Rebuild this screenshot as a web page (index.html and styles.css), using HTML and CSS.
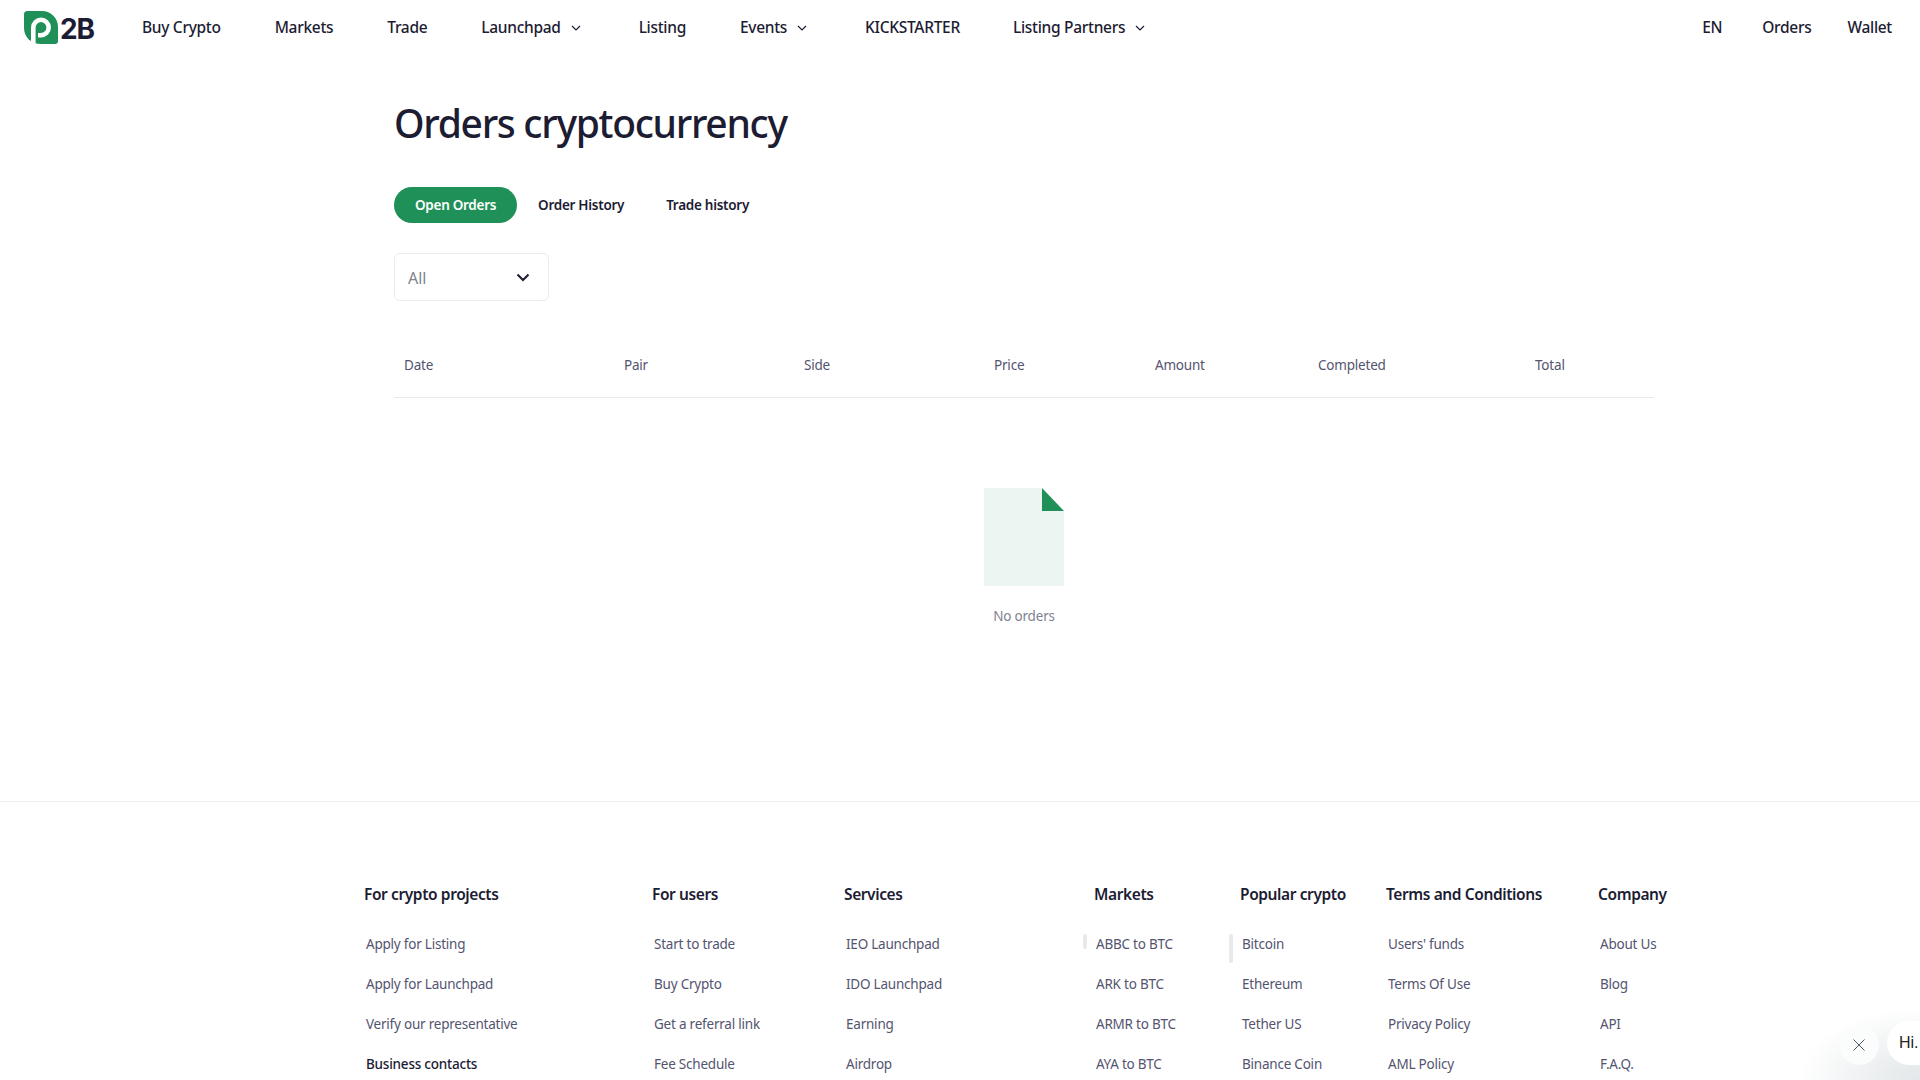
FILE: index.html
```html
<!DOCTYPE html>
<html lang="en">
<head>
<meta charset="utf-8">
<title>Orders cryptocurrency</title>
<link rel="stylesheet" href="styles.css">
</head>
<body>
<header class="nav">
  <a class="logo">
    <svg class="logo-mark" width="35" height="33" viewBox="0 0 35 33"><path fill="#1f9158" d="M4 0H18C27 0 34 7 34 16V30C34 32 33 33 31 33H17C7 33 0 26 0 17V4C0 1 1 0 4 0Z"/><path fill="none" stroke="#fff" stroke-width="4.600" d="M9.300 33V16.500A7.700 7.700 0 1 1 17 24.200H14"/></svg>
    <span class="logo-text">2B</span>
  </a>
  <nav class="nav-left">
    <a class="nav-item i1">Buy Crypto</a>
    <a class="nav-item i2">Markets</a>
    <a class="nav-item i3">Trade</a>
    <a class="nav-item i4">Launchpad<svg class="caret" width="10" height="6" viewBox="0 0 10 6"><path d="M1 1l4 4 4-4" fill="none" stroke="#1c1c33" stroke-width="1.200"/></svg></a>
    <a class="nav-item i5">Listing</a>
    <a class="nav-item i6">Events<svg class="caret" width="10" height="6" viewBox="0 0 10 6"><path d="M1 1l4 4 4-4" fill="none" stroke="#1c1c33" stroke-width="1.200"/></svg></a>
    <a class="nav-item i7">KICKSTARTER</a>
    <a class="nav-item">Listing Partners<svg class="caret" width="10" height="6" viewBox="0 0 10 6"><path d="M1 1l4 4 4-4" fill="none" stroke="#1c1c33" stroke-width="1.200"/></svg></a>
  </nav>
  <nav class="nav-right">
    <a class="nav-item">EN</a>
    <a class="nav-item r2">Orders</a>
    <a class="nav-item">Wallet</a>
  </nav>
</header>

<main class="main">
  <h1 class="title">Orders cryptocurrency</h1>
  <div class="tabs">
    <a class="tab tab-active">Open Orders</a>
    <a class="tab">Order History</a>
    <a class="tab">Trade history</a>
  </div>
  <div class="select">
    <span>All</span>
    <svg width="14" height="9" viewBox="0 0 14 9"><path d="M1.500 1.500L7 7l5.500-5.500" fill="none" stroke="#1c1c33" stroke-width="2"/></svg>
  </div>
  <div class="thead">
    <span class="c1">Date</span>
    <span class="c2">Pair</span>
    <span class="c3">Side</span>
    <span class="c4">Price</span>
    <span class="c5">Amount</span>
    <span class="c6">Completed</span>
    <span>Total</span>
  </div>
  <div class="empty">
    <svg width="80" height="98" viewBox="0 0 80 98"><path fill="#ecf5f1" d="M0 0H58V23H80V98H0Z"/><path fill="#1f9158" d="M58 0L80 23H58Z"/></svg>
    <p class="empty-text">No orders</p>
  </div>
</main>

<footer class="footer">
  <div class="fcols">
    <section class="fcol f1">
      <h3>For crypto projects</h3>
      <ul><li>Apply for Listing</li><li>Apply for Launchpad</li><li>Verify our representative</li><li class="strong">Business contacts</li></ul>
    </section>
    <section class="fcol f2">
      <h3>For users</h3>
      <ul><li>Start to trade</li><li>Buy Crypto</li><li>Get a referral link</li><li>Fee Schedule</li></ul>
    </section>
    <section class="fcol f3">
      <h3>Services</h3>
      <ul><li>IEO Launchpad</li><li>IDO Launchpad</li><li>Earning</li><li>Airdrop</li></ul>
    </section>
    <section class="fcol f4">
      <h3>Markets</h3>
      <i class="thumb thumb-s"></i>
      <ul><li>ABBC to BTC</li><li>ARK to BTC</li><li>ARMR to BTC</li><li>AYA to BTC</li></ul>
    </section>
    <section class="fcol f5">
      <h3>Popular crypto</h3>
      <i class="thumb thumb-l"></i>
      <ul><li>Bitcoin</li><li>Ethereum</li><li>Tether US</li><li>Binance Coin</li></ul>
    </section>
    <section class="fcol f6">
      <h3>Terms and Conditions</h3>
      <ul><li>Users' funds</li><li>Terms Of Use</li><li>Privacy Policy</li><li>AML Policy</li></ul>
    </section>
    <section class="fcol">
      <h3>Company</h3>
      <ul><li>About Us</li><li>Blog</li><li>API</li><li>F.A.Q.</li></ul>
    </section>
  </div>
</footer>

<div class="chat">
  <button class="chat-close"><svg width="12" height="12" viewBox="0 0 12 12"><path d="M.5.500l11 11M11.500.500l-11 11" stroke="#4e5a63" stroke-width="1" fill="none"/></svg></button>
  <div class="chat-bubble">Hi.</div>
</div>
</body>
</html>
```
FILE: styles.css
```css
* { box-sizing: border-box; }
html, body { margin: 0; height: 1080px; overflow: hidden; background: #fff; }
body { font-family: "Noto Sans", sans-serif; color: #1c1c33; position: relative; }
a { color: inherit; text-decoration: none; }

.nav { height: 54px; display: flex; align-items: center; padding: 0 28px 0 24px; justify-content: space-between; }
.nav-left { display: flex; align-items: center; margin-left: 47px; margin-right: auto; }
.nav-right { display: flex; align-items: center; gap: 40px; }
.nav-item { font-size: 15.500px; letter-spacing: -.3px; font-weight: 500; line-height: 22px; display: flex; align-items: center; }
.r2 { margin-right: -4px; }
.i1 { margin-right: 54px; }
.i2 { margin-right: 54px; }
.i3 { margin-right: 54px; }
.i4 { margin-right: 58px; }
.i5 { margin-right: 54px; }
.i6 { margin-right: 58px; }
.i7 { margin-right: 53px; }
.caret { margin-left: 10px; margin-top: 2px; }

.logo { display: flex; align-items: flex-end; width: 71px; height: 33px; }
.logo-mark { flex: none; }
.logo-text { font-family: "Inter", sans-serif; font-weight: 700; font-size: 28px; line-height: 29px; margin-left: 1px; letter-spacing: -1.200px; color: #1c1c33; }

.main { margin-left: 394px; width: 1260px; height: 747px; padding-top: 43px; }
.title { margin: 0; font-size: 39px; letter-spacing: -1.300px; line-height: 52px; font-weight: 500; white-space: nowrap; }
.tabs { display: flex; align-items: center; margin-top: 38px; }
.tab { height: 36px; padding: 0 21px; border-radius: 18px; font-size: 13.500px; letter-spacing: -.28px; font-weight: 600; line-height: 36px; }
.tab-active { background: #1f9158; color: #fff; }
.select { width: 155px; height: 48px; margin-top: 30px; padding: 0 18px 0 13px; border: 1px solid #ebebef; border-radius: 6px; display: flex; align-items: center; justify-content: space-between; font-size: 16px; color: #81838f; }
.select span { position: relative; top: 1px; }
.thead { height: 97px; border-bottom: 1px solid #e9e9ec; display: flex; align-items: flex-end; padding: 0 0 22px 10px; font-size: 13.500px; letter-spacing: -.2px; line-height: 19px; color: #54546f; font-weight: 400; }
.c1 { width: 220px; }
.c2 { width: 180px; }
.c3 { width: 190px; }
.c4 { width: 161px; }
.c5 { width: 163px; }
.c6 { width: 217px; }
.empty { display: flex; flex-direction: column; align-items: center; margin-top: 90px; }
.empty svg { display: block; }
.empty-text { margin: 21px 0 0; font-size: 13.500px; letter-spacing: -.2px; line-height: 19px; color: #7f8290; }

.footer { border-top: 1px solid #eeeef0; padding: 80px 0 0 364px; }
.fcols { display: flex; }
.fcol { position: relative; }
.f1 { width: 288px; }
.f2 { width: 192px; }
.f3 { width: 250px; }
.f4 { width: 146px; }
.f5 { width: 146px; }
.f6 { width: 212px; }
.fcol h3 { margin: 0; font-size: 15.500px; letter-spacing: -.4px; line-height: 24px; font-weight: 600; white-space: nowrap; }
.fcol ul { list-style: none; margin: 28px 0 0; padding: 0 0 0 2px; }
.fcol li { font-size: 13.500px; letter-spacing: -.22px; line-height: 20px; margin-bottom: 20px; color: #54546f; white-space: nowrap; }
.fcol .strong { color: #1c1c33; font-weight: 500; }
.thumb { position: absolute; left: -11px; top: 52px; width: 4px; border-radius: 2px; background: #e9e9ec; }
.thumb-s { height: 15px; }
.thumb-l { height: 29px; }

.chat { position: absolute; right: 0; bottom: 0; width: 170px; height: 110px; display: flex; align-items: flex-start; padding: 55px 0 0 89px; gap: 8px; overflow: hidden; background: radial-gradient(ellipse 120px 72px at 100% 100%, #e3e7e9 0%, rgba(227,231,233,.5) 55%, rgba(255,255,255,0) 100%); }
.chat-close { width: 40px; height: 40px; flex: none; border: 0; border-radius: 50%; background: #fbfcfc; display: flex; align-items: center; justify-content: center; padding: 0; }
.chat-bubble { flex: none; width: 80px; height: 44px; margin-top: -4px; border-radius: 22px; background: #fff; font-family: "Liberation Sans", sans-serif; font-size: 16px; line-height: 44px; padding-left: 12px; color: #222; }
```
